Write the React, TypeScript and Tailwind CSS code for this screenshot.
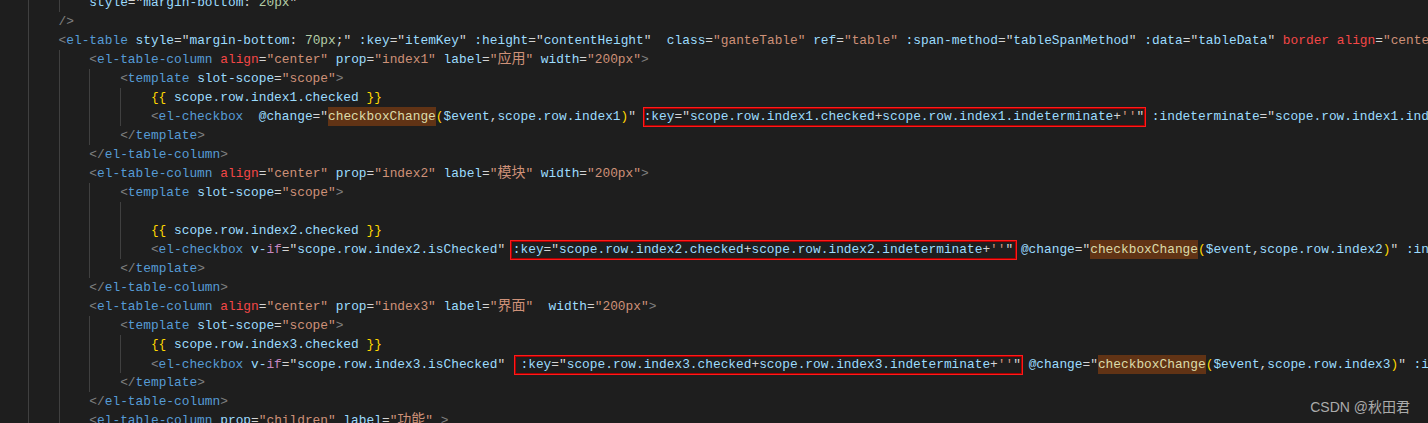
type Tok = [string, string] | { box: Tok[]; cls: string };

type Line = { i: number; t: Tok[] };

const color: Record<string, string> = {
  p: "text-[#808080]",
  t: "text-[#569cd6]",
  a: "text-[#9cdcfe]",
  w: "text-[#d4d4d4]",
  s: "text-[#ce9178]",
  r: "text-[#f44747]",
  n: "text-[#b5cea8]",
  y: "text-[#ffd700]",
  k: "text-[#c586c0]",
  f: "inline-block leading-[19px] bg-[#613315] text-[#dcdcaa]",
  c: "font-['Noto_Sans_CJK_SC',sans-serif] text-[14px] leading-[12px] text-[#ce9178]",
};

const boxBase =
  "inline-block leading-[18px] border border-[#ff1a1a] shadow-[inset_0_0_0_1px_#a80000]";

const column = (idx: string, label: string, gap: string): Tok[] => [
  ["p", "<"],
  ["t", "el-table-column"],
  ["w", " "],
  ["r", "align"],
  ["w", "="],
  ["s", '"center"'],
  ["w", " "],
  ["a", "prop"],
  ["w", "="],
  ["s", `"${idx}"`],
  ["w", " "],
  ["a", "label"],
  ["w", "="],
  ["s", '"'],
  ["c", label],
  ["s", '"'],
  ["w", gap],
  ["a", "width"],
  ["w", "="],
  ["s", '"200px"'],
  ["p", ">"],
];

const template: Tok[] = [
  ["p", "<"],
  ["t", "template"],
  ["w", " "],
  ["a", "slot-scope"],
  ["w", "="],
  ["s", '"scope"'],
  ["p", ">"],
];

const close = (name: string): Tok[] => [
  ["p", "</"],
  ["t", name],
  ["p", ">"],
];

const mustache = (idx: string): Tok[] => [
  ["y", "{{"],
  ["w", " "],
  ["a", `scope.row.${idx}.checked`],
  ["w", " "],
  ["y", "}}"],
];

const keyBox = (idx: string, cls: string): Tok => ({
  cls,
  box: [
    ["a", ":key"],
    ["w", '="'],
    ["a", `scope.row.${idx}.checked`],
    ["w", "+"],
    ["a", `scope.row.${idx}.indeterminate`],
    ["w", "+"],
    ["s", "''"],
    ["w", '"'],
  ],
});

const change = (idx: string): Tok[] => [
  ["a", "@change"],
  ["w", '="'],
  ["f", "checkboxChange"],
  ["y", "("],
  ["a", "$event"],
  ["w", ","],
  ["a", `scope.row.${idx}`],
  ["y", ")"],
  ["w", '"'],
];

const indeterminate = (idx: string): Tok[] => [
  ["a", ":indeterminate"],
  ["w", '="'],
  ["a", `scope.row.${idx}.indeterminate`],
  ["w", '" '],
  ["a", "v-model"],
  ["w", '="'],
  ["a", `scope.row.${idx}.checked`],
  ["w", '"'],
];

const vIf = (idx: string): Tok[] => [
  ["a", "v-"],
  ["k", "if"],
  ["w", '="'],
  ["a", `scope.row.${idx}.isChecked`],
  ["w", '"'],
];

const lines: Line[] = [
  {
    i: 3,
    t: [
      ["a", "style"],
      ["w", '="'],
      ["a", "margin-bottom"],
      ["w", ": "],
      ["n", "20px"],
      ["w", '"'],
    ],
  },
  { i: 2, t: [["p", "/>"]] },
  {
    i: 2,
    t: [
      ["p", "<"],
      ["t", "el-table"],
      ["w", " "],
      ["a", "style"],
      ["w", '="'],
      ["a", "margin-bottom"],
      ["w", ": "],
      ["n", "70px"],
      ["w", ';" '],
      ["a", ":key"],
      ["w", '="'],
      ["a", "itemKey"],
      ["w", '" '],
      ["a", ":height"],
      ["w", '="'],
      ["a", "contentHeight"],
      ["w", '"  '],
      ["a", "class"],
      ["w", "="],
      ["s", '"ganteTable"'],
      ["w", " "],
      ["a", "ref"],
      ["w", "="],
      ["s", '"table"'],
      ["w", " "],
      ["a", ":span-method"],
      ["w", '="'],
      ["a", "tableSpanMethod"],
      ["w", '" '],
      ["a", ":data"],
      ["w", '="'],
      ["a", "tableData"],
      ["w", '" '],
      ["r", "border"],
      ["w", " "],
      ["r", "align"],
      ["w", "="],
      ["s", '"center"'],
      ["p", ">"],
    ],
  },
  { i: 3, t: column("index1", "应用", " ") },
  { i: 4, t: template },
  { i: 5, t: mustache("index1") },
  {
    i: 5,
    t: [
      ["p", "<"],
      ["t", "el-checkbox"],
      ["w", "  "],
      ...change("index1"),
      ["w", " "],
      keyBox("index1", "-ml-[1px] pl-0 pr-[0.5px] -mr-[1.5px]"),
      ["w", " "],
      ...indeterminate("index1"),
    ],
  },
  { i: 4, t: close("template") },
  { i: 3, t: close("el-table-column") },
  { i: 3, t: column("index2", "模块", " ") },
  { i: 4, t: template },
  { i: 5, t: [] },
  { i: 5, t: mustache("index2") },
  {
    i: 5,
    t: [
      ["p", "<"],
      ["t", "el-checkbox"],
      ["w", " "],
      ...vIf("index2"),
      ["w", " "],
      keyBox("index2", "-ml-[3px] pl-[2px] pr-[2.5px] -mr-[3.5px]"),
      ["w", " "],
      ...change("index2"),
      ["w", " "],
      ...indeterminate("index2"),
    ],
  },
  { i: 4, t: close("template") },
  { i: 3, t: close("el-table-column") },
  { i: 3, t: column("index3", "界面", "  ") },
  { i: 4, t: template },
  { i: 5, t: mustache("index3") },
  {
    i: 5,
    t: [
      ["p", "<"],
      ["t", "el-checkbox"],
      ["w", " "],
      ...vIf("index3"),
      ["w", "  "],
      keyBox("index3", "-ml-[6px] pl-[5px] pr-[1.5px] -mr-[2.5px] mt-[1px]"),
      ["w", " "],
      ...change("index3"),
      ["w", " "],
      ...indeterminate("index3"),
    ],
  },
  { i: 4, t: close("template") },
  { i: 3, t: close("el-table-column") },
  {
    i: 3,
    t: [
      ["p", "<"],
      ["t", "el-table-column"],
      ["w", " "],
      ["a", "prop"],
      ["w", "="],
      ["s", '"children"'],
      ["w", " "],
      ["a", "label"],
      ["w", "="],
      ["s", '"'],
      ["c", "功能"],
      ["s", '"'],
      ["w", " "],
      ["p", ">"],
    ],
  },
];

const Tokens = ({ toks }: { toks: Tok[] }) => (
  <>
    {toks.map((tok, k) =>
      Array.isArray(tok) ? (
        <span key={k} className={color[tok[0]]}>
          {tok[1]}
        </span>
      ) : (
        <span key={k} className={`${boxBase} ${tok.cls}`}>
          <Tokens toks={tok.box} />
        </span>
      )
    )}
  </>
);

const App = () => {
  return (
    <main className="relative w-[1428px] h-[423px] overflow-hidden bg-[#1e1e1e]">
      <div className="-mt-[7px] -ml-[3px] font-['Liberation_Mono',monospace] text-[12.83px] text-[#d4d4d4]">
        {lines.map((line, n) => (
          <div key={n} className="flex h-[19px]">
            {Array.from({ length: line.i }).map((_, g) => (
              <div key={g} className="w-[4ch] shrink-0 border-l border-[#404040]" />
            ))}
            <div className="whitespace-pre leading-[19px]">
              <Tokens toks={line.t} />
            </div>
          </div>
        ))}
      </div>
      <div className="absolute right-[18px] bottom-[6px] font-['Liberation_Sans','Noto_Sans_CJK_SC',sans-serif] text-[14px] leading-[20px] text-[#ababab]">
        CSDN @秋田君
      </div>
    </main>
  );
};

export default App;
